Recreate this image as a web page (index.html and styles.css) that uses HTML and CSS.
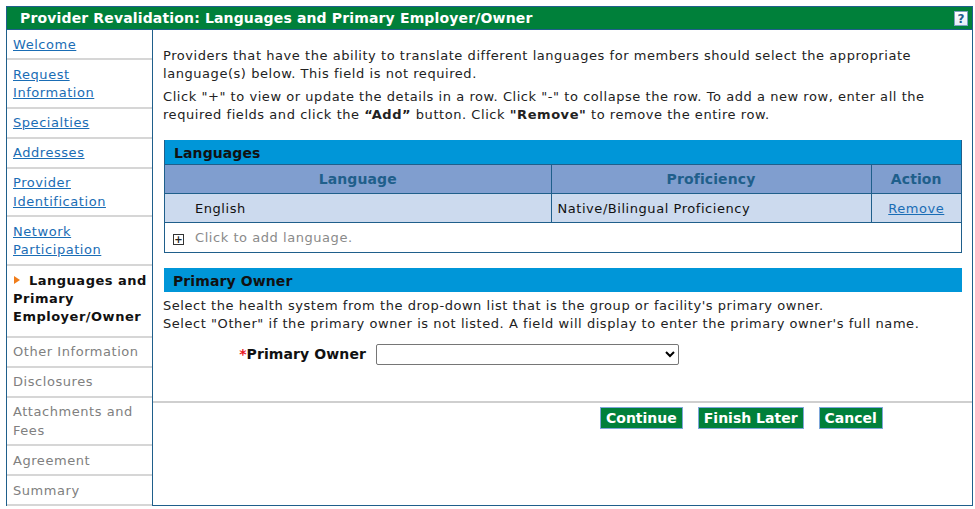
FILE: index.html
```html
<!DOCTYPE html>
<html>
<head>
<meta charset="utf-8">
<link rel="stylesheet" href="styles.css">
</head>
<body>
<div class="frame">
  <div class="titlebar">
    <span class="title">Provider Revalidation: Languages and Primary Employer/Owner</span>
    <span class="help">?</span>
  </div>
  <div class="main">
    <nav class="side">
      <div class="item"><a href="#">Welcome</a></div>
      <div class="item"><a href="#">Request Information</a></div>
      <div class="item"><a href="#">Specialties</a></div>
      <div class="item"><a href="#">Addresses</a></div>
      <div class="item"><a href="#">Provider Identification</a></div>
      <div class="item"><a href="#">Network Participation</a></div>
      <div class="item current"><span class="arrow"></span>Languages and Primary Employer/Owner</div>
      <div class="item off">Other Information</div>
      <div class="item off">Disclosures</div>
      <div class="item off">Attachments and Fees</div>
      <div class="item off">Agreement</div>
      <div class="item off">Summary</div>
    </nav>
    <section class="content">
      <div class="upper">
        <p class="intro">Providers that have the ability to translate different languages for members should select the appropriate language(s) below. This field is not required.</p>
        <p class="intro">Click "+" to view or update the details in a row. Click "-" to collapse the row. To add a new row, enter all the required fields and click the <b>“Add”</b> button. Click <b>"Remove"</b> to remove the entire row.</p>

        <div class="panel">
          <div class="panel-head">Languages</div>
          <table class="grid">
            <thead>
              <tr><th class="c-lang">Language</th><th class="c-prof">Proficiency</th><th class="c-act">Action</th></tr>
            </thead>
            <tbody>
              <tr class="data"><td class="lang">English</td><td>Native/Bilingual Proficiency</td><td class="act"><a href="#">Remove</a></td></tr>
              <tr class="add"><td colspan="3"><span class="plus">+</span><span class="add-text">Click to add language.</span></td></tr>
            </tbody>
          </table>
        </div>

        <div class="panel-head owner-head">Primary Owner</div>
        <p class="owner-text">Select the health system from the drop-down list that is the group or facility's primary owner.<br>Select "Other" if the primary owner is not listed. A field will display to enter the primary owner's full name.</p>
        <div class="field">
          <label class="field-label"><span class="req">*</span>Primary Owner</label>
          <select class="field-select"><option></option></select>
        </div>
      </div>
      <div class="buttons">
        <button class="btn">Continue</button>
        <button class="btn">Finish Later</button>
        <button class="btn">Cancel</button>
      </div>
    </section>
  </div>
</div>
</body>
</html>
```
FILE: styles.css
```css
* { box-sizing: border-box; }
html, body { margin: 0; padding: 0; background: #fff; }
body {
  padding: 6px 3px 3px 6px;
  font-family: "DejaVu Sans", Verdana, sans-serif;
  font-size: 13px;
  letter-spacing: 0.55px;
  color: #222;
}
.frame {
  width: 967px;
  height: 500px;
  border: 1px solid #1f5f8b;
  display: flex;
  flex-direction: column;
}
.titlebar {
  background: #00803a;
  height: 23px;
  display: flex;
  align-items: center;
  justify-content: space-between;
  padding: 0 4px 0 13px;
  border-bottom: 1px solid #1f5f8b;
}
.title {
  color: #fff;
  font-weight: bold;
  font-size: 14px;
  letter-spacing: 0.15px;
}
.help {
  width: 14px;
  height: 15px;
  background: linear-gradient(#ffffff, #e6eef7);
  border: 1px solid #7f9fc0;
  color: #1f5f8b;
  font-weight: bold;
  font-size: 12px;
  line-height: 14px;
  text-align: center;
  letter-spacing: 0;
}
.main {
  flex: 1;
  display: flex;
  min-height: 0;
}
.side {
  width: 146px;
  border-right: 1px solid #1f5f8b;
  flex-shrink: 0;
}
.item {
  padding: 5.5px 6px 4px 6px;
  line-height: 18.5px;
  border-bottom: 2px solid #d6d6d6;
}
.item a { color: #1a6db5; }
.item.off { color: #808080; }
.item.current {
  font-weight: bold;
  color: #111;
  letter-spacing: 0.5px;
  line-height: 18px;
  padding: 6px 0 10px 6px;
}
.arrow {
  display: inline-block;
  width: 0; height: 0;
  border-top: 4px solid transparent;
  border-bottom: 4px solid transparent;
  border-left: 6px solid #f07d1a;
  margin: 0 9px 0 1px;
  vertical-align: 1px;
}
.content {
  flex: 1;
  display: flex;
  flex-direction: column;
}
.upper {
  padding: 17px 10px 36px 10px;
  border-bottom: 2px solid #cfcfcf;
}
.intro {
  margin: 0 0 5px 0;
  line-height: 18px;
}
.panel {
  margin: 16px 0 0 1px;
  border: 1px solid #1f5f8b;
  border-top: none;
}
.panel-head {
  background: #0096d8;
  color: #111;
  font-weight: bold;
  font-size: 14px;
  letter-spacing: 0.1px;
  height: 24px;
  line-height: 27px;
  padding-left: 9px;
}
.owner-head { margin: 15px 0 0 1px; }
.grid {
  width: 100%;
  border-collapse: collapse;
}
.grid th {
  background: #809ecf;
  color: #1f5f8b;
  font-size: 14px;
  font-weight: bold;
  letter-spacing: 0.1px;
  height: 29px;
  border: 1px solid #1f5f8b;
}
.grid th:first-child { border-left: none; }
.grid th:last-child { border-right: none; }
.c-lang { width: 386px; }
.c-prof { width: 320px; }
.grid td {
  height: 29px;
  border: 1px solid #1f5f8b;
  padding: 0 6px;
}
.grid td:first-child { border-left: none; }
.grid td:last-child { border-right: none; }
.data td { background: #ccdaee; color: #111; }
.data td.lang { padding-left: 30px; }
.act { text-align: center; }
.act a { color: #1a6db5; }
.add td { background: #fff; border-bottom: none; padding-left: 8px; }
.plus {
  display: inline-block;
  width: 11px; height: 11px;
  border: 1px solid #333;
  font-size: 10px;
  line-height: 9px;
  text-align: center;
  font-weight: bold;
  letter-spacing: 0;
  vertical-align: -1px;
  margin-right: 11px;
}
.add-text { color: #8a8a8a; }
.owner-text {
  margin: 5px 0 0 0;
  line-height: 18px;
}
.field {
  display: flex;
  align-items: center;
  margin-top: 11px;
}
.field-label {
  width: 203px;
  text-align: right;
  font-weight: bold;
  font-size: 14px;
  letter-spacing: 0.1px;
  color: #111;
  margin-right: 10px;
}
.req { color: #e8141e; }
.field-select {
  width: 303px;
  height: 21px;
  border: 1px solid #767676;
  border-radius: 2px;
  background: #fff;
}
.buttons {
  display: flex;
  padding: 4px 0 0 447px;
  gap: 15px;
}
.btn {
  background: #00803a;
  color: #fff;
  font-family: "DejaVu Sans", Verdana, sans-serif;
  font-weight: bold;
  font-size: 14px;
  letter-spacing: 0;
  height: 22px;
  padding: 0 5px;
  border: 1px solid #7ea6d9;
  line-height: 18px;
}
```
